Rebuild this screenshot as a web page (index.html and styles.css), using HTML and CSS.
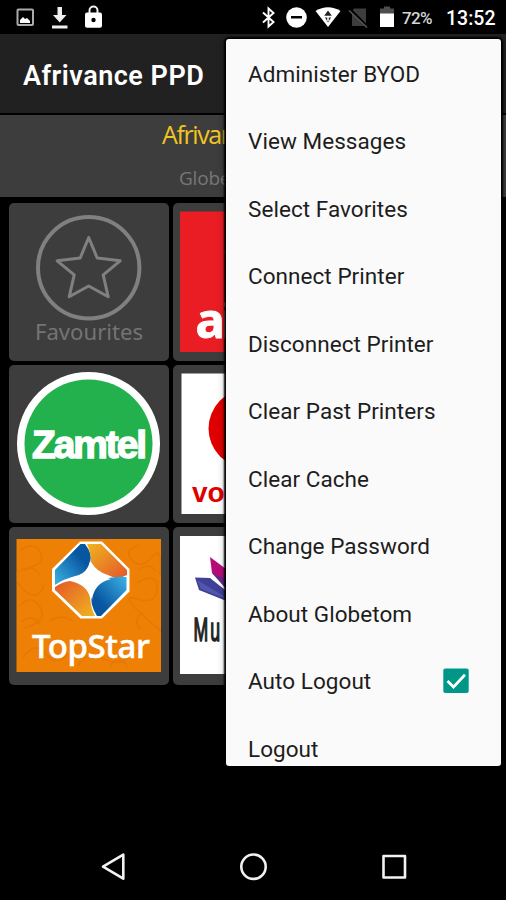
FILE: index.html
```html
<!DOCTYPE html>
<html lang="en">
<head>
<meta charset="utf-8">
<title>Afrivance PPD</title>
<link rel="stylesheet" href="styles.css">
</head>
<body>
<div class="screen">
  <header class="status">
    <svg class="status-left" width="120" height="34" viewBox="0 0 120 34">
      <rect x="17.5" y="9.5" width="15.5" height="15.5" rx="1" fill="none" stroke="#aaa" stroke-width="2"/>
      <path d="M20 23v-3l3-3 2 2 2-1 3 3v2z" fill="#fff"/>
      <path d="M57.500 7h4.500v8h4.500L59.700 22.500 53 15h4.500zM52 25.500h15.500v3H52z" fill="#eee"/>
      <path d="M89.500 13v-2.500a4 4 0 0 1 8 0V13" fill="none" stroke="#eee" stroke-width="2"/>
      <rect x="85" y="12.500" width="17" height="15.300" rx="2" fill="#fff"/>
      <circle cx="93.500" cy="20" r="2.200" fill="#000"/>
    </svg>
    <svg class="status-right" width="144" height="34" viewBox="256 0 144 34">
      <path d="M263 12.500l10.500 9.500-5 4.500v-18l5 4.500-10.500 9.500" fill="none" stroke="#fff" stroke-width="1.900"/>
      <circle cx="296.500" cy="17.500" r="10.300" fill="#fff"/><rect x="291" y="16" width="11" height="2.500" fill="#000"/>
      <path d="M315.500 11q12.500-7.500 25 0L328 27z" fill="#fff"/>
      <path d="M328 10.500l3.800 5.300h-7.600zM325 17.500h6l-3 5z" fill="#222"/><path d="M327.200 16h1.600v5h-1.600z" fill="#fff"/>
      <path d="M354 8.500h12V26h-14V11z" fill="#3d3d3d"/><path d="M350 9.500l17 17" stroke="#000" stroke-width="3"/><path d="M349 10.500l18 17" stroke="#555" stroke-width="1.700"/>
      <path d="M380 8.500h4V6.500h6v2h4V14h-14z" fill="#4d4d4d"/><path d="M380 13.500h14V27h-14z" fill="#fff"/>
    </svg>
    <span class="battery">72%</span>
    <span class="clock">13:52</span>
  </header>
  <div class="appbar"><h1>Afrivance PPD</h1></div>
  <section class="banner">
    <div class="banner-title">Afrivan</div>
    <div class="banner-sub">Globe</div>
  </section>
  <main class="grid">
    <div class="tile">
      <svg width="160" height="158" viewBox="9 203 160 158">
        <circle cx="88.700" cy="267.700" r="50.700" fill="none" stroke="#808080" stroke-width="4"/>
        <path d="M88.700 237.500l8.500 20.500 23 2.800-17 14 5 22-19.500-10.800-19.500 10.800 5-22-17-14 23-2.800z" fill="none" stroke="#808080" stroke-width="3" stroke-linejoin="round"/>
        <text class="fav" x="35" y="339.500" textLength="108" lengthAdjust="spacingAndGlyphs">Favourites</text>
      </svg>
    </div>
    <div class="tile">
      <svg width="160" height="158" viewBox="173 203 160 158">
        <path d="M180 211.500h146V352H180z" fill="#ea1c24"/>
        <path d="M232 256q-9 0-7-5 3-3 7-2" fill="#fff"/>
        <text class="airtel" x="195.500" y="337.500">ai</text>
      </svg>
    </div>
    <div class="tile"></div>
    <div class="tile">
      <svg width="160" height="158" viewBox="9 365 160 158">
        <circle cx="88.500" cy="443.500" r="71.500" fill="#fff"/><circle cx="88.500" cy="443.500" r="64" fill="#23b14d"/>
        <text class="zamtel" x="32" y="457.500" textLength="113" lengthAdjust="spacingAndGlyphs">Zamtel</text>
      </svg>
    </div>
    <div class="tile">
      <svg width="160" height="158" viewBox="173 365 160 158">
        <path d="M181.500 373.500H325V514H181.500z" fill="#fff"/>
        <circle cx="248" cy="428.500" r="39.500" fill="#df0000"/>
        <text class="voda" x="192" y="501.500">vo</text>
      </svg>
    </div>
    <div class="tile"></div>
    <div class="tile">
      <svg width="160" height="158" viewBox="9 527 160 158">
        <defs>
          <linearGradient id="blue1" x1="1" y1="0" x2="0" y2="1"><stop offset=".3" stop-color="#0855a0"/><stop offset="1" stop-color="#3bb4e5"/></linearGradient>
          <linearGradient id="blue2" x1="1" y1="0" x2="0" y2="1"><stop stop-color="#3bb4e5"/><stop offset=".7" stop-color="#0855a0"/></linearGradient>
          <linearGradient id="warm1" x1="0" y1="0" x2="1" y2="1"><stop stop-color="#efb51e"/><stop offset="1" stop-color="#e4572b"/></linearGradient>
          <linearGradient id="warm2" x1="0" y1="0" x2="1" y2="1"><stop stop-color="#e4572b"/><stop offset="1" stop-color="#efb51e"/></linearGradient>
          <clipPath id="card"><path d="M16.500 539H161V672H16.500z"/></clipPath>
        </defs>
        <path d="M16.500 539H161V672H16.500z" fill="#ee8005"/>
        <g fill="none" stroke="#df7505" stroke-width="1.600" opacity=".6" clip-path="url(#card)">
          <path d="M20 551q13-11 20 1t-13 16-5 20 22-3M18 607q13-14 22 0t-16 21M23 658q12-18 23-4t22 0M139 545q-16 5-7 15t20-3 8 18M137 583q20-12 20 5t-20 11 10 20 9 8M78 666q9-15 24-8t21 3 18-13"/>
          <path d="M24 571q8-7 16 4m-18 47q8-9 18 2M139 570q9-8 17 1m-14 41q-10 10-1 17M50 621q12-8 23 0m37 46q8-14 18 0"/>
        </g>
        <path d="M80 541.500h22L129.500 569v22.500L102 618.500H80.500L52 591V569z" fill="#fff"/>
        <path d="M80.500 544h4.500q8 10 5 19-2 8-11 12-16 4-24 10V570z" fill="url(#blue1)"/>
        <path d="M87 544h14l26 26v5q-10 5-19 0-11-3-17-13 0-9-4-18z" fill="url(#warm1)"/>
        <path d="M126.500 577v13L101 616h-4q-8-13-5-23 3-9 16-15 13-2 18.500-1z" fill="url(#blue2)"/>
        <path d="M55 587q7-5 15-6 16 3 20 16 1 12 5 19H82L55 590z" fill="url(#warm2)"/>
        <path d="M90 561q3 14 21 18-17 4-19 21-4-17-22-20 16-3 20-19z" fill="#fff"/>
        <text class="topstar" x="32" y="658" textLength="118">TopStar</text>
      </svg>
    </div>
    <div class="tile">
      <svg width="160" height="158" viewBox="173 527 160 158">
        <path d="M180 536h146v138H180z" fill="#fff"/>
        <path d="M210 557l24 18v19l-22-21z" fill="#b60c79"/><path d="M212 573l22 10v15z" fill="#67278a"/>
        <path d="M195 577.500l15 .5 24 19v7l-35-14z" fill="#3e4197"/><path d="M197 580l35 21-31-12z" fill="#5456ae"/>
        <text class="multi" transform="translate(193.500 641) scale(.52 1)">Mu</text>
      </svg>
    </div>
    <div class="tile"></div>
  </main>
  <nav class="navbar">
    <svg width="506" height="66" viewBox="0 834 506 66" fill="none" stroke="#f2f2f2" stroke-width="2.600" stroke-linejoin="round">
      <path d="M103 866.700l20.300-12v24z"/><circle cx="253.500" cy="866.700" r="12.200"/><rect x="383.500" y="856" width="21.500" height="21.500"/>
    </svg>
  </nav>
  <div class="menu">
    <div class="item">Administer BYOD</div>
    <div class="item">View Messages</div>
    <div class="item">Select Favorites</div>
    <div class="item">Connect Printer</div>
    <div class="item">Disconnect Printer</div>
    <div class="item">Clear Past Printers</div>
    <div class="item">Clear Cache</div>
    <div class="item">Change Password</div>
    <div class="item">About Globetom</div>
    <div class="item">Auto Logout
      <svg width="26" height="26" viewBox="0 0 26 26"><rect x=".3" y=".5" width="25.400" height="24.500" rx="2" fill="#009688"/><path d="M4.500 13l6 6L22 6.800" fill="none" stroke="#fff" stroke-width="2.700"/></svg>
    </div>
    <div class="item">Logout</div>
  </div>
</div>
</body>
</html>
```

FILE: styles.css
```css
* { box-sizing: border-box; }
body { margin: 0; background: #000; font-family: Roboto, "Liberation Sans", sans-serif; }
svg { display: block; flex: none; }
.screen { position: relative; width: 506px; height: 900px; overflow: hidden; background: #000; display: flex; flex-direction: column; }
.status { height: 34px; flex: none; display: flex; align-items: center; color: #fff; }
.status-right { margin-left: 136px; }
.battery { width: 44px; padding-left: 2px; font-size: 17px; font-weight: 500; line-height: 34px; letter-spacing: -0.7px; color: #d5d5d5; padding-top: 2px; }
.clock { margin-left: 2px; font-size: 19.5px; font-weight: 500; line-height: 34px; padding-top: 3px; letter-spacing: 0; white-space: nowrap; }
.appbar { height: 79px; flex: none; background: #212121; display: flex; align-items: center; padding: 4px 0 0 23px; }
h1 { margin: 0; font-size: 27px; font-weight: 600; line-height: 32px; letter-spacing: 0.5px; color: #fff; }
.banner { height: 82px; margin-top: 2px; flex: none; background: #3d3d3d; font-family: "Open Sans", sans-serif; white-space: nowrap; }
.banner-title { padding: 4px 0 0 162px; font-size: 25px; line-height: 30px; letter-spacing: -1.4px; color: #f3c522; }
.banner-sub { padding: 17px 0 0 179px; font-size: 19px; line-height: 24px; letter-spacing: -0.2px; color: #777; }
.grid { margin: 6px 0 0 9px; display: grid; grid-template-columns: repeat(3, 160px); grid-auto-rows: 158px; gap: 4px; flex: none; }
.tile { background: #3d3d3d; border-radius: 5px; overflow: hidden; }
.tile:nth-child(3n) { background: #000; }
.fav { font: 22px "Noto Sans", sans-serif; fill: #747474; }
.airtel { font: bold 49px "Noto Sans", sans-serif; letter-spacing: -3.5px; fill: #fff; stroke: #fff; stroke-width: 0.8px; }
.zamtel { font: bold 38px "Liberation Sans", sans-serif; letter-spacing: -2px; fill: #fff; stroke: #fff; stroke-width: 1.4px; }
.voda { font: bold 28px "Liberation Sans", sans-serif; fill: #df0000; }
.topstar { font: 500 33px "Noto Sans", sans-serif; fill: #fff; stroke: #fff; stroke-width: 0.5px; }
.multi { font: 34px "Liberation Sans", sans-serif; fill: #222; stroke: #222; stroke-width: 1.6px; letter-spacing: 4px; }
.navbar { margin-top: auto; height: 66px; flex: none; }
.menu { position: absolute; left: 225.5px; top: 39px; width: 275.5px; height: 727px; padding-top: 1px; overflow: hidden; background: #fafafa; border-radius: 3px; box-shadow: 0 0 2px 2px #000, 0 3px 10px rgba(0, 0, 0, 0.35); }
.item { height: 67.5px; padding: 0 32px 0 22.5px; display: flex; align-items: center; justify-content: space-between; font-size: 22.5px; letter-spacing: 0.05px; color: #1d1d1d; white-space: nowrap; }
```
